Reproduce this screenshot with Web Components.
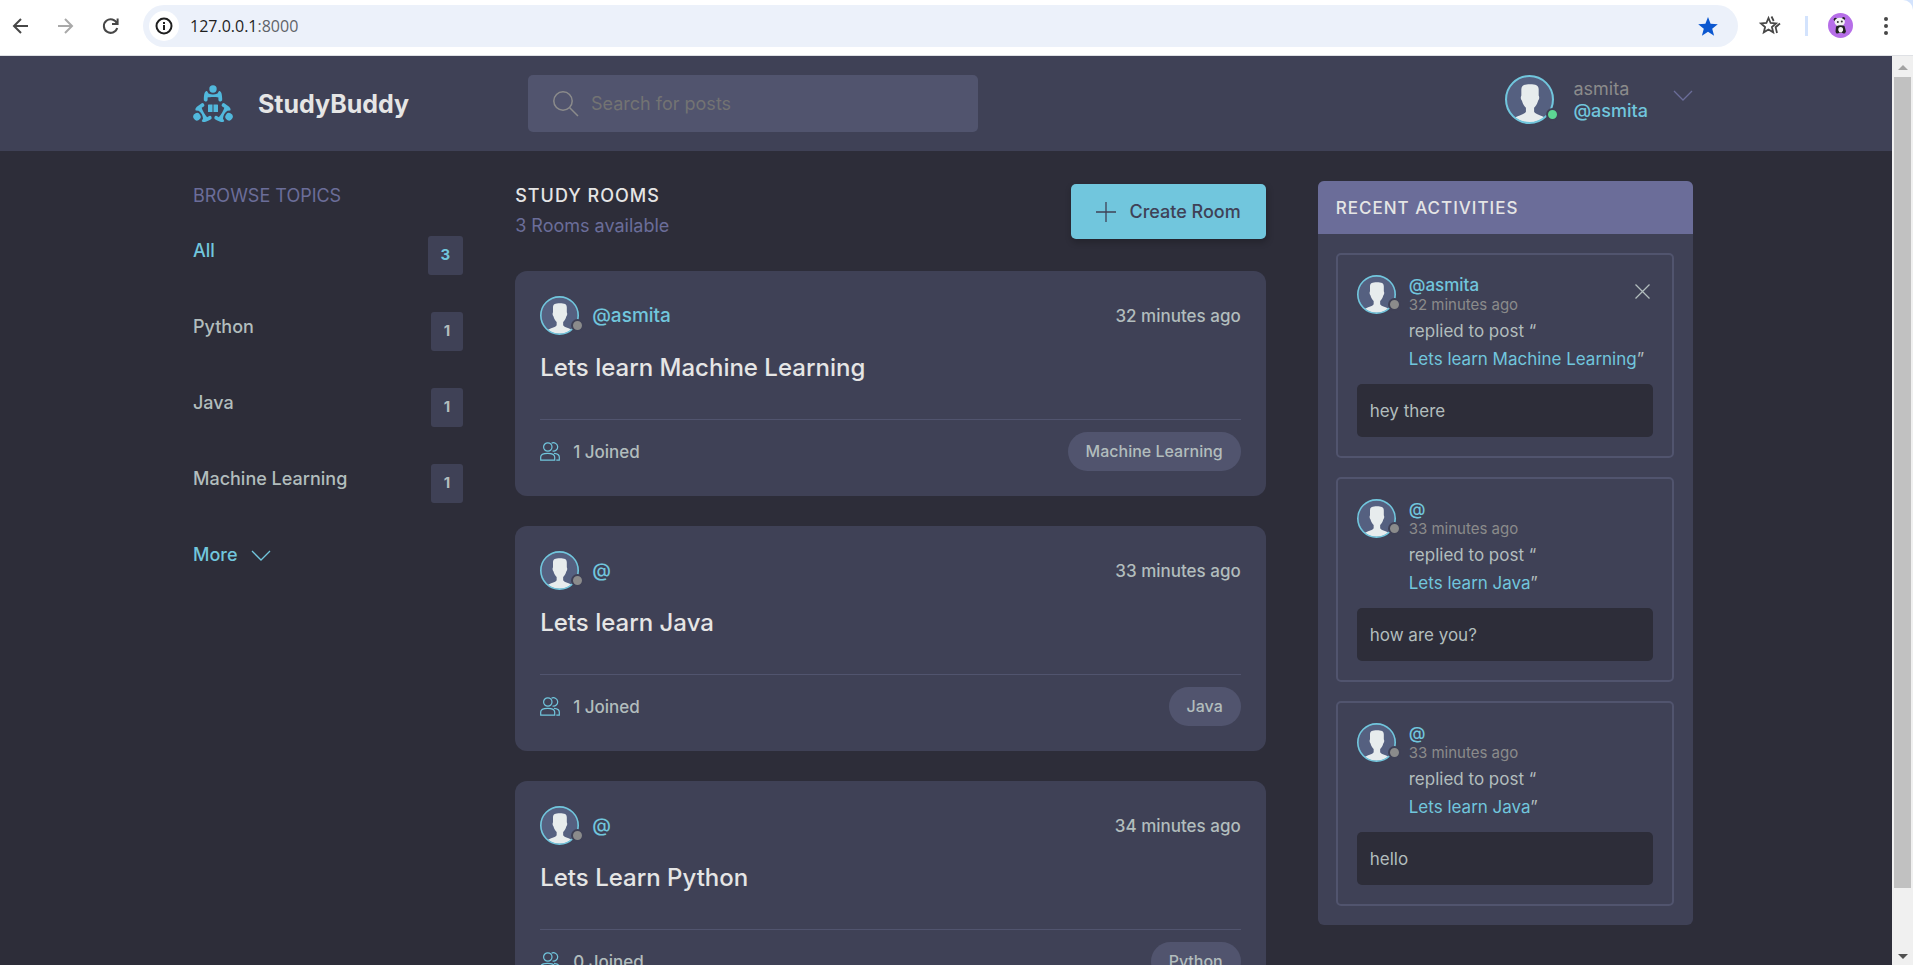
<!DOCTYPE html>
<html lang="en">
<head>
<meta charset="utf-8">
<title>StudyBuddy</title>
<style>
  html, body { margin: 0; height: 100%; overflow: hidden; }
  body {
    --main: #71c6dd;
    --dark: #3f4156;
    --dark-medium: #51546e;
    --light: #e5e5e5;
    --gray: #8b8b8b;
    --light-gray: #b2bdbd;
    --violet: #6b6d99;
    --bg: #2d2d39;
    font-family: Inter, "Liberation Sans", sans-serif;
    font-size: 17px;
    color: var(--light-gray);
  }
</style>
</head>
<body>
<browser-window>
  <study-header slot="page"></study-header>
  <study-layout slot="page">
    <topic-list slot="left">
      <topic-item count="3" active>All</topic-item>
      <topic-item count="1">Python</topic-item>
      <topic-item count="1">Java</topic-item>
      <topic-item count="1">Machine Learning</topic-item>
    </topic-list>
    <room-feed slot="center" count="3">
      <room-card user="@asmita" time="32 minutes ago" joined="1" topic="Machine Learning">Lets learn Machine Learning</room-card>
      <room-card user="@" time="33 minutes ago" joined="1" topic="Java">Lets learn Java</room-card>
      <room-card user="@" time="34 minutes ago" joined="0" topic="Python">Lets Learn Python</room-card>
    </room-feed>
    <activity-panel slot="right">
      <activity-item user="@asmita" time="32 minutes ago" room="Lets learn Machine Learning" removable>hey there</activity-item>
      <activity-item user="@" time="33 minutes ago" room="Lets learn Java">how are you?</activity-item>
      <activity-item user="@" time="33 minutes ago" room="Lets learn Java">hello</activity-item>
    </activity-panel>
  </study-layout>
</browser-window>

<script>
const base = `
  *, *::before, *::after { box-sizing: border-box; }
  a { color: var(--main); text-decoration: none; }
  button { font: inherit; border: 0; background: none; padding: 0; cursor: pointer; }
  h1, h2, h3, p, ul { margin: 0; padding: 0; }
  svg { display: block; flex: none; }
`;

function define(name, css, html) {
  customElements.define(name, class extends HTMLElement {
    connectedCallback() {
      if (this.shadowRoot) return;
      const root = this.attachShadow({ mode: 'open' });
      const template = document.createElement('template');
      template.innerHTML = `<style>${base}${css}</style>${html(this)}`;
      root.append(template.content.cloneNode(true));
    }
  });
}

const attr = (el, name) => el.getAttribute(name) || '';

define('user-avatar', `
  :host { display: block; flex: none; position: relative; width: var(--size, 39px); height: var(--size, 39px); }
  svg { width: 100%; height: 100%; }
  i { position: absolute; right: -5px; bottom: 3px; width: 13px; height: 13px; border-radius: 50%;
      border: 2px solid var(--dark); background: var(--gray); }
  :host([online]) i { background: #5dd693; }
`, () => `
  <svg viewBox="0 0 48 48" role="img" aria-label="Avatar">
    <defs><clipPath id="c"><circle cx="24" cy="24" r="22.5"/></clipPath></defs>
    <circle cx="24" cy="24" r="23" fill="#556080"/>
    <path clip-path="url(#c)" fill="#e7eced" d="M16 14C16 10 19 9 24.500 9S33 10 33 14V20C34 22 33.500 24 32.500 25C31.500 29 30 30.500 28.500 32V36C30 39 36 39 41 43L36 48H13L8 43C13 39 19 39 20.500 36V32C19 30.500 17.500 29 16.500 25C15.500 24 15 22 16 20Z"/>
    <circle cx="24" cy="24" r="23" fill="none" stroke="#71c6dd" stroke-width="2"/>
  </svg><i></i>`);

define('browser-toolbar', `
  :host { display: block; flex: none; background: #d3e3fd; }
  .bar { display: flex; align-items: center; height: 56px; padding: 0 18px 4px 11px; background: #fff;
         border-bottom: 1px solid #dfe1e5; border-top-right-radius: 10px; }
  .nav { display: flex; gap: 25px; margin-right: 22px; }
  .address { flex: 1; display: flex; align-items: center; height: 42px; border-radius: 21px; background: #ecf1fa;
             padding: 0 18px 0 6px; }
  .info { width: 30px; height: 30px; border-radius: 50%; background: #fff; display: grid; place-items: center; margin-right: 11px; }
  .url { flex: 1; font: 16px/24px "Open Sans", sans-serif; color: #5f6368; outline: 0; }
  .url b { font-weight: 400; color: #1f1f1f; }
  .tools { display: flex; align-items: center; margin-left: 20px; }
  .sep { width: 3px; height: 20px; background: #d3e3fd; margin: 0 20px 0 23px; }
  .more { margin-left: 24px; }
`, () => `
  <div class="bar">
    <div class="nav">
      <button aria-label="Back"><svg width="20" height="20" viewBox="0 0 20 20" fill="none" stroke="#474747" stroke-width="2"><path d="M17 10H3.500M10 3L3 10L10 17"/></svg></button>
      <button aria-label="Forward"><svg width="20" height="20" viewBox="0 0 20 20" fill="none" stroke="#a9a9a9" stroke-width="2"><path d="M2 10H15.500M9 3L16 10L9 17"/></svg></button>
      <button aria-label="Reload"><svg width="20" height="20" viewBox="0 0 20 20" fill="none" stroke="#474747" stroke-width="2"><path d="M16 7.500A6.800 6.800 0 1 0 16.200 12M16.600 2.500V8H11"/></svg></button>
    </div>
    <div class="address">
      <button class="info" aria-label="Site information"><svg width="18" height="18" viewBox="0 0 18 18" fill="none" stroke="#1f1f1f" stroke-width="2"><circle cx="9" cy="9" r="7.500"/><path d="M9 8V13M9 5V7"/></svg></button>
      <span class="url" role="textbox" contenteditable="true" aria-label="Address" spellcheck="false"><b>127.0.0.1</b>:8000</span>
      <button aria-label="Bookmarked"><svg width="24" height="24" viewBox="0 0 24 24" fill="#0b57d0"><path d="M12 3L14.600 9.800L21.800 10.200L16.200 14.700L18.100 21.700L12 17.700L5.900 21.700L7.800 14.700L2.200 10.200L9.400 9.800Z"/></svg></button>
    </div>
    <div class="tools">
      <button aria-label="Bookmarks"><svg width="24" height="22" viewBox="0 0 24 22" fill="none" stroke="#474747" stroke-width="1.800"><path d="M10.500 3L12.600 8L18 8.400L13.900 12L15.200 17.300L10.500 14.500L5.800 17.300L7.100 12L3 8.400L8.400 8ZM13.500 1.500L15.700 6M22 8.500L17.600 12.200L19 18"/></svg></button>
      <span class="sep"></span>
      <button aria-label="Profile"><svg width="25" height="25" viewBox="0 0 25 25"><circle cx="12.500" cy="12.500" r="12.500" fill="#b66ee8"/><circle cx="7.500" cy="6.500" r="1.800" fill="#222"/><circle cx="15.500" cy="5.500" r="1.600" fill="#222"/><ellipse cx="11.700" cy="9" rx="5.200" ry="4.200" fill="#f2f2f2"/><circle cx="9.800" cy="9" r="1" fill="#333"/><circle cx="13.800" cy="8.600" r="1" fill="#333"/><path d="M8 13.500Q12 11.500 16.500 13L18 18.500L15.500 20H9L7.500 18.500Z" fill="#222"/><ellipse cx="12.700" cy="16.700" rx="2.400" ry="2.800" fill="#f2f2f2"/><circle cx="9.300" cy="19" r="1.600" fill="#222"/><circle cx="16" cy="19" r="1.600" fill="#222"/></svg></button>
      <button class="more" aria-label="Menu"><svg width="18" height="20" viewBox="0 0 18 20" fill="#474747"><circle cx="9" cy="3" r="2"/><circle cx="9" cy="10" r="2"/><circle cx="9" cy="17" r="2"/></svg></button>
    </div>
  </div>`);

define('scroll-track', `
  :host { display: flex; flex: none; flex-direction: column; align-items: center; width: 21px; background: #f0f0f0; }
  svg { height: 21px; }
  .run { flex: 1; align-self: stretch; padding: 0 2px; }
  .thumb { height: 93.500%; background: #c1c1c1; }
`, () => `
  <svg width="10" height="21" viewBox="0 0 10 21" fill="#a3a3a3"><path d="M0 14L5 9L10 14Z"/></svg>
  <div class="run"><div class="thumb"></div></div>
  <svg width="10" height="21" viewBox="0 0 10 21" fill="#505050"><path d="M0 10L5 15L10 10Z"/></svg>`);

define('browser-window', `
  :host { display: flex; flex-direction: column; height: 100vh; }
  .view { flex: 1; min-height: 0; display: flex; }
  .page { flex: 1; min-width: 0; overflow: hidden; background: var(--bg); }
`, () => `
  <browser-toolbar></browser-toolbar>
  <div class="view"><div class="page"><slot name="page"></slot></div><scroll-track></scroll-track></div>`);

const container = `width: 90%; max-width: 1500px; margin: 0 auto;`;

define('study-header', `
  :host { display: block; background: var(--dark); padding: 19px 6px 19px 0; }
  .row { ${container} display: flex; align-items: center; }
  .logo { display: flex; align-items: center; gap: 25px; flex: 0 1 335px; color: var(--light); }
  h1 { font-size: 25px; line-height: 40px; font-weight: 700; }
  form { flex: 0 1 450px; }
  label { display: flex; align-items: center; gap: 12px; height: 57px; padding: 0 25px; border-radius: 5px; background: var(--dark-medium); }
  input { flex: 1; min-width: 0; border: 0; outline: 0; padding: 0; background: none; color: var(--light); font: inherit; font-size: 18px; }
  input::placeholder { color: #737373; opacity: 1; }
  .user { margin-left: auto; display: flex; align-items: center; padding-bottom: 8px; }
  user-avatar { --size: 49px; }
  .who { display: flex; flex-direction: column; margin: 0 25px 0 19px; font-size: 18px; line-height: 22px; font-weight: 500; }
  .who span { color: var(--gray); font-weight: 400; }
  .user button { padding-bottom: 8px; }
`, () => `
  <div class="row">
    <a class="logo" href="#home">
      <svg width="40" height="40" viewBox="0 0 40 40" fill="#51b8dc" aria-hidden="true">
        <defs><g id="p"><circle cx="20" cy="5" r="3.700"/><path d="M14 7C12 7 11 9 10.800 15A1.900 1.900 0 0 0 14.600 16V13.600C17 12.800 23 12.800 25.400 13.600V16A1.900 1.900 0 0 0 29.200 15C29 9 28 7 26 7L24.500 9.400Q20 11.500 15.500 9.400Z"/></g></defs>
        <use href="#p"/><use href="#p" transform="rotate(120 20 23.500)"/><use href="#p" transform="rotate(240 20 23.500)"/>
        <path d="M15.500 20.500H19.500V28H15V21ZM20.500 20.500H24.500L25 21V28H20.500Z"/>
      </svg>
      <h1>StudyBuddy</h1>
    </a>
    <form role="search">
      <label>
        <svg width="26" height="26" viewBox="0 0 26 26" fill="none" stroke="#8b8b8b" stroke-width="1.500"><circle cx="10" cy="10" r="9.200"/><path d="M16.500 16.500L25 25"/></svg>
        <input type="search" placeholder="Search for posts" aria-label="Search for posts">
      </label>
    </form>
    <div class="user">
      <user-avatar online></user-avatar>
      <div class="who"><span>asmita</span><a href="#profile">@asmita</a></div>
      <button aria-label="Account menu"><svg width="20" height="11" viewBox="0 0 20 11" fill="none" stroke="#6b6d99" stroke-width="1.300"><path d="M1 1L10 10L19 1"/></svg></button>
    </div>
  </div>`);

define('study-layout', `
  :host { display: block; padding: 30px 6px 30px 0; }
  .grid { ${container} display: grid; grid-template-columns: 18fr 50fr 25fr; column-gap: 52px; align-items: start; }
`, () => `
  <main class="grid"><slot name="left"></slot><slot name="center"></slot><slot name="right"></slot></main>`);

define('topic-list', `
  :host { display: block; }
  h2 { font-size: 18px; line-height: 30px; font-weight: 400; color: var(--violet); margin-bottom: 25px; }
  .more { display: inline-flex; align-items: center; gap: 13px; font-size: 18px; line-height: 30px; font-weight: 500; }
`, () => `
  <h2>BROWSE TOPICS</h2>
  <slot></slot>
  <a class="more" href="#topics">More <svg width="20" height="11" viewBox="0 0 20 11" fill="none" stroke="#71c6dd" stroke-width="1.300"><path d="M1 1L10 10L19 1"/></svg></a>`);

define('topic-item', `
  :host { display: block; margin-bottom: 37px; }
  a { display: flex; justify-content: space-between; align-items: flex-start; color: var(--light-gray); font-size: 18px; line-height: 30px; font-weight: 500; }
  :host([active]) a { color: var(--main); }
  .count { font-size: 15px; line-height: 37px; height: 39px; font-weight: 700; padding: 0 13px; border-radius: 3px; background: var(--dark); }
`, el => `<a href="#topic"><slot></slot><span class="count">${attr(el, 'count')}</span></a>`);

define('room-feed', `
  :host { display: block; }
  .head { display: flex; justify-content: space-between; align-items: flex-start; margin-bottom: 27px; padding-top: 3px; }
  h2 { font-size: 18px; line-height: 24px; font-weight: 500; letter-spacing: 1px; color: var(--light); }
  p { font-size: 18px; line-height: 36px; color: var(--violet); }
  .create { display: flex; align-items: center; gap: 13px; height: 55px; padding: 0 25px; border-radius: 5px; background: var(--main);
    color: var(--dark); font-size: 18px; font-weight: 500; box-shadow: 1px 3px 6px 1px rgba(0, 0, 0, 0.2); }
  .rooms { display: grid; gap: 30px; }
`, el => `
  <div class="head">
    <div><h2>STUDY ROOMS</h2><p>${attr(el, 'count')} Rooms available</p></div>
    <button class="create"><svg width="20" height="20" viewBox="0 0 20 20" stroke="#3f4156" stroke-width="1.300"><path d="M10 0V20M0 10H20"/></svg>Create Room</button>
  </div>
  <div class="rooms"><slot></slot></div>`);

define('room-card', `
  :host { display: block; padding: 25px; border-radius: 12px; background: var(--dark); }
  .top, .bottom, .author, .joined { display: flex; align-items: center; gap: 13px; }
  .top, .bottom { justify-content: space-between; font-weight: 500; }
  .author { font-size: 19px; }
  h3 { margin: 15px 0 33px; font-size: 24px; line-height: 36px; font-weight: 500; color: var(--light); }
  .bottom { border-top: 1px solid var(--dark-medium); padding-top: 12px; }
  .joined { color: var(--light-gray); }
  .tag { padding: 0 18px; border-radius: 20px; background: var(--dark-medium); color: var(--light-gray); font-size: 16px; line-height: 39px; }
`, el => `
  <div class="top">
    <a class="author" href="#profile"><user-avatar></user-avatar>${attr(el, 'user')}</a>
    <span>${attr(el, 'time')}</span>
  </div>
  <h3><slot></slot></h3>
  <div class="bottom">
    <a class="joined" href="#room"><svg width="20" height="19" viewBox="0 0 20 19" fill="none" stroke="#71c6dd" stroke-width="1.200"><circle cx="7.800" cy="5" r="4.200"/><path d="M11.500 1.200A4.200 4.200 0 1 1 12.500 9M0.700 18.200V15C0.700 12.500 4 11.300 7.700 11.300S14.700 12.500 14.700 15V18.200ZM14 11.300C17.500 11.600 19.300 13 19.300 15V18.200H16.300"/></svg>${attr(el, 'joined')} Joined</a>
    <a class="tag" href="#topic">${attr(el, 'topic')}</a>
  </div>`);

define('activity-panel', `
  :host { display: block; border-radius: 6px; overflow: hidden; background: var(--dark); }
  h2 { padding: 1px 18px 0; font-size: 17px; line-height: 52px; font-weight: 500; letter-spacing: 1px; color: var(--light); background: var(--violet); }
  .items { display: grid; gap: 19px; padding: 19px 19px 19px 18px; }
`, () => `<h2>RECENT ACTIVITIES</h2><div class="items"><slot></slot></div>`);

define('activity-item', `
  :host { display: block; padding: 20px 19px 19px; border: 2px solid var(--dark-medium); border-radius: 5px; }
  .head { display: flex; align-items: flex-start; gap: 13px; }
  .text { flex: 1; min-width: 0; }
  .name { display: block; line-height: 20px; font-weight: 500; }
  time { display: block; font-size: 15px; line-height: 20px; color: var(--gray); margin-bottom: 2px; }
  .line { line-height: 28px; white-space: nowrap; }
  button { margin: 9px 3px 0 -28px; }
  .body { margin-top: 11px; padding: 1px 13px 0; border-radius: 5px; background: var(--bg); line-height: 52px; }
`, el => `
  <div class="head">
    <user-avatar></user-avatar>
    <div class="text">
      <a class="name" href="#profile">${attr(el, 'user')}</a>
      <time>${attr(el, 'time')}</time>
      <p class="line">replied to post “<br><a href="#room">${attr(el, 'room')}</a>”</p>
    </div>
    ${el.hasAttribute('removable') ? '<button aria-label="Remove"><svg width="15" height="15" viewBox="0 0 15 15" stroke="#b2bdbd" stroke-width="1.300"><path d="M0.500 0.500L14.500 14.500M14.500 0.500L0.500 14.500"/></svg></button>' : ''}
  </div>
  <p class="body"><slot></slot></p>`);
</script>
</body>
</html>
